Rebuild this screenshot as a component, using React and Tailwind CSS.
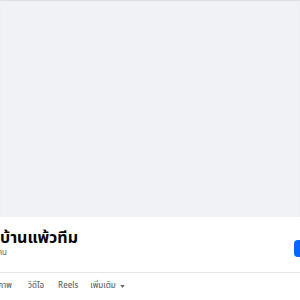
export default function App() {
  const font = { fontFamily: '"Noto Sans Thai", "Noto Sans", "Liberation Sans", sans-serif' }

  return (
    <div className="h-[300px] w-[300px] overflow-hidden flex flex-col bg-white" style={font}>
      {/* cover area */}
      <div className="h-[217px] shrink-0 bg-[#f0f2f5] shadow-[inset_0_1px_1px_rgba(0,0,0,0.08)]"></div>

      {/* page header */}
      <div className="flex items-start justify-between overflow-hidden">
        <div className="flex flex-col pt-[11px]">
          <h1 className="text-[16px] leading-[20px] font-bold text-[#050505] whitespace-nowrap">บ้านแพ้วทีม</h1>
          <div className="flex justify-end w-[7px] overflow-hidden">
            <span className="shrink-0 whitespace-nowrap text-[8px] leading-[10px] text-[#65676b]">ผู้ติดตาม 1.2 พันคน</span>
          </div>
        </div>
        <div className="shrink-0 mt-[23px] -mr-[94px] w-[100px] h-[17px] rounded-[4px] bg-[#0866ff]"></div>
      </div>

      <div className="mt-[14px] h-px bg-[#e4e6eb] shrink-0"></div>

      {/* tabs */}
      <div className="flex items-center h-[26px] text-[8px] font-medium text-[#65676b] whitespace-nowrap">
        <div className="flex justify-end w-[12px] overflow-hidden">
          <span className="shrink-0">รูปภาพ</span>
        </div>
        <span className="ml-[16px]">วิดีโอ</span>
        <span className="ml-[14px]">Reels</span>
        <span className="ml-[12px] flex items-center gap-[4px]">
          เพิ่มเติม
          <svg width="5" height="3" viewBox="0 0 6 4">
            <path d="M0 0h6L3 4z" fill="#65676b" />
          </svg>
        </span>
      </div>
    </div>
  )
}
